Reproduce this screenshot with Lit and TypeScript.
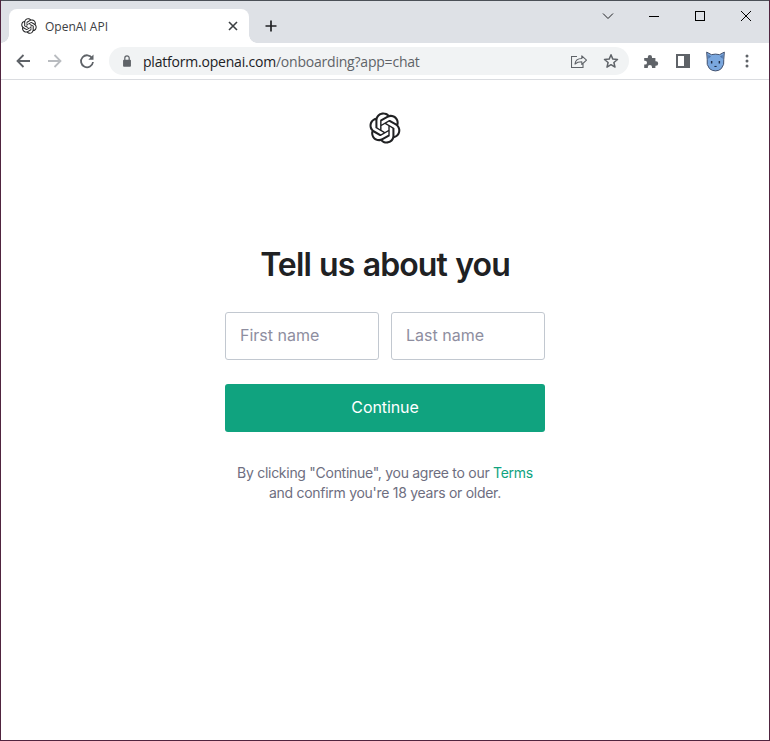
import { LitElement, html, css, svg } from "lit";
import { customElement } from "lit/decorators.js";

const LOGO = "M37.5324 16.8707C37.9808 15.5241 38.1363 14.0974 37.9886 12.6859C37.8409 11.2744 37.3934 9.91076 36.676 8.68622C35.6126 6.83404 33.9882 5.3676 32.0373 4.4985C30.0864 3.62941 27.9098 3.40259 25.8215 3.85078C24.8796 2.7893 23.7219 1.94125 22.4257 1.36341C21.1295 0.785575 19.7249 0.491269 18.3058 0.500197C16.1708 0.495044 14.0893 1.16803 12.3614 2.42214C10.6335 3.67624 9.34853 5.44666 8.6917 7.47815C7.30085 7.76286 5.98686 8.3414 4.8377 9.17505C3.68854 10.0087 2.73073 11.0782 2.02839 12.312C0.956464 14.1591 0.498905 16.2988 0.721698 18.4228C0.944492 20.5467 1.83612 22.5449 3.268 24.1293C2.81966 25.4759 2.66413 26.9026 2.81182 28.3141C2.95951 29.7256 3.40701 31.0892 4.12437 32.3138C5.18791 34.1659 6.8123 35.6322 8.76321 36.5013C10.7141 37.3704 12.8907 37.5973 14.9789 37.1492C15.9208 38.2107 17.0786 39.0587 18.3747 39.6366C19.6709 40.2144 21.0755 40.5087 22.4946 40.4998C24.6307 40.5054 26.7133 39.8321 28.4418 38.5772C30.1704 37.3223 31.4556 35.5506 32.1119 33.5179C33.5027 33.2332 34.8167 32.6547 35.9659 31.821C37.115 30.9874 38.0728 29.9178 38.7752 28.684C39.8458 26.8371 40.3023 24.6979 40.0789 22.5748C39.8556 20.4517 38.9639 18.4544 37.5324 16.8707ZM22.4978 37.8849C20.7443 37.8874 19.0459 37.2733 17.6994 36.1501C17.7601 36.117 17.8666 36.0586 17.936 36.0161L25.9004 31.4156C26.1003 31.3019 26.2663 31.137 26.3813 30.9378C26.4964 30.7386 26.5563 30.5124 26.5549 30.2825V19.0542L29.9213 20.998C29.9389 21.0068 29.9541 21.0198 29.9656 21.0359C29.977 21.052 29.9842 21.0707 29.9867 21.0902V30.3889C29.9842 32.375 29.1946 34.2791 27.7909 35.6841C26.3872 37.0892 24.4838 37.8806 22.4978 37.8849ZM6.39227 31.0064C5.51397 29.4888 5.19742 27.7107 5.49804 25.9832C5.55718 26.0187 5.66048 26.0818 5.73461 26.1244L13.699 30.7248C13.8975 30.8408 14.1233 30.902 14.3532 30.902C14.583 30.902 14.8088 30.8408 15.0073 30.7248L24.731 25.1103V28.9979C24.7321 29.0177 24.7283 29.0376 24.7199 29.0556C24.7115 29.0736 24.6988 29.0893 24.6829 29.1012L16.6317 33.7497C14.9096 34.7416 12.8643 35.0097 10.9447 34.4954C9.02506 33.9811 7.38785 32.7263 6.39227 31.0064ZM4.29707 13.6194C5.17156 12.0998 6.55279 10.9364 8.19885 10.3327C8.19885 10.4013 8.19491 10.5228 8.19491 10.6071V19.808C8.19351 20.0378 8.25334 20.2638 8.36823 20.4629C8.48312 20.6619 8.64893 20.8267 8.84863 20.9404L18.5723 26.5542L15.206 28.4979C15.1894 28.5089 15.1703 28.5155 15.1505 28.5173C15.1307 28.5191 15.1107 28.516 15.0924 28.5082L7.04046 23.8557C5.32135 22.8601 4.06716 21.2235 3.55289 19.3046C3.03862 17.3858 3.30624 15.3413 4.29707 13.6194ZM31.955 20.0556L22.2312 14.4411L25.5976 12.4981C25.6142 12.4872 25.6333 12.4805 25.6531 12.4787C25.6729 12.4769 25.6928 12.4801 25.7111 12.4879L33.7631 17.1364C34.9967 17.849 36.0017 18.8982 36.6606 20.1613C37.3194 21.4244 37.6047 22.849 37.4832 24.2684C37.3617 25.6878 36.8382 27.0432 35.9743 28.1759C35.1103 29.3086 33.9415 30.1717 32.6047 30.6641C32.6047 30.5947 32.6047 30.4733 32.6047 30.3889V21.188C32.6066 20.9586 32.5474 20.7328 32.4332 20.5338C32.319 20.3348 32.154 20.1698 31.955 20.0556ZM35.3055 15.0128C35.2464 14.9765 35.1431 14.9142 35.069 14.8717L27.1045 10.2712C26.906 10.1554 26.6803 10.0943 26.4504 10.0943C26.2206 10.0943 25.9948 10.1554 25.7963 10.2712L16.0726 15.8858V11.9982C16.0715 11.9783 16.0753 11.9585 16.0837 11.9405C16.0921 11.9225 16.1048 11.9068 16.1207 11.8949L24.1719 7.25025C25.4053 6.53903 26.8158 6.19376 28.2383 6.25482C29.6608 6.31589 31.0364 6.78077 32.2044 7.59508C33.3723 8.40939 34.2842 9.53945 34.8334 10.8531C35.3826 12.1667 35.5464 13.6095 35.3055 15.0128ZM14.2424 21.9419L10.8752 19.9981C10.8576 19.9893 10.8423 19.9763 10.8309 19.9602C10.8195 19.9441 10.8122 19.9254 10.8098 19.9058V10.6071C10.8107 9.18295 11.2173 7.78848 11.9819 6.58696C12.7466 5.38544 13.8377 4.42659 15.1275 3.82264C16.4173 3.21869 17.8524 2.99464 19.2649 3.1767C20.6775 3.35876 22.0089 3.93941 23.1034 4.85067C23.0427 4.88379 22.937 4.94215 22.8668 4.98473L14.9024 9.58517C14.7025 9.69878 14.5366 9.86356 14.4215 10.0626C14.3065 10.2616 14.2466 10.4877 14.2479 10.7175L14.2424 21.9419ZM16.071 17.9991L20.4018 15.4978L24.7325 17.9975V22.9985L20.4018 25.4983L16.071 22.9985V17.9991Z";

const logo = (size: number) => html`<svg width=${size} height=${size} viewBox="0 0 41 41"><path d=${LOGO} fill="#202123"></path></svg>`;
const icon = (body: unknown, size = 16) => html`<svg width=${size} height=${size} viewBox="0 0 16 16" fill="none">${body}</svg>`;

@customElement("app-root")
export class AppRoot extends LitElement {
  static styles = css`
    :host { display: block; width: 770px; height: 741px; overflow: hidden; background: #fff; }
    .frame { box-sizing: border-box; height: 741px; display: flex; flex-direction: column;
      border: 1px solid #50243f; border-top: 0; }
    .strip { box-sizing: border-box; height: 43px; flex: none; display: flex; background: #dee1e6;
      border-top: 1px solid #4b5057; padding: 8px 0 0 8px; }
    .tab { position: relative; width: 240px; height: 34px; box-sizing: border-box; background: #fff; border-radius: 8px 8px 0 0;
      display: flex; align-items: center; padding: 0 8px 0 12px; font: 12px "Open Sans", sans-serif; color: #3c4043; }
    .tab::before, .tab::after { content: ""; position: absolute; bottom: 0; width: 8px; height: 8px; }
    .tab::before { left: -8px; background: radial-gradient(circle at 0 0, #dee1e6 7.5px, #fff 8px); }
    .tab::after { right: -8px; background: radial-gradient(circle at 100% 0, #dee1e6 7.5px, #fff 8px); }
    .tab-title { margin-left: 8px; flex: 1; }
    .tab-close { display: flex; width: 16px; justify-content: center; }
    .new-tab { display: flex; align-items: center; justify-content: center; width: 28px; height: 28px; margin: 3px 0 0 8px; }
    .spacer { flex: 1; }
    .win { width: 46px; height: 30px; margin-top: -8px; display: flex; align-items: center; justify-content: center; }
    .toolbar { box-sizing: border-box; height: 37px; flex: none; display: flex; align-items: flex-start; background: #fff;
      border-bottom: 1px solid #dadce0; padding: 4px 6px; }
    .btn { width: 32px; height: 28px; flex: none; display: flex; align-items: center; justify-content: center; }
    .omni { width: 520px; height: 28px; margin: 0 6px; flex: none; box-sizing: border-box; background: #f1f3f4; border-radius: 14px;
      display: flex; align-items: center; padding: 0 2px 0 11px; }
    .url { margin-left: 9px; flex: 1; font: 14px "Open Sans", sans-serif; color: #202124; letter-spacing: -0.21px; white-space: nowrap; }
    .url span { color: #5f6368; }
    .omni-icon { width: 32px; display: flex; justify-content: center; flex: none; }
    .page { flex: 1; display: flex; flex-direction: column; align-items: center; background: #fff; font-family: Inter, sans-serif; }
    .logo { margin-top: 32px; height: 32px; display: flex; }
    h1 { margin: 101px 0 0; font: 600 32px/40px Inter, sans-serif; color: #202123; letter-spacing: -0.88px; word-spacing: 1px; }
    .names { display: flex; gap: 12px; margin-top: 27px; }
    input { box-sizing: border-box; width: 154px; height: 48px; padding: 0 14px 2px; border: 1px solid #c2c8d0; border-radius: 3px;
      font: 16px Inter, sans-serif; color: #202123; outline: none; background: #fff; }
    input::placeholder { color: #8e8ea0; opacity: 1; }
    button { box-sizing: border-box; display: block; width: 320px; height: 48px; margin-top: 24px; border: 0; border-radius: 3px;
      background: #10a37f; color: #fff; font: 16px Inter, sans-serif; padding: 0 0 2px; letter-spacing: -0.1px; }
    .legal { margin: 31px 0 0; width: 320px; text-align: center; font: 14px/20px Inter, sans-serif; color: #6e6e80; letter-spacing: -0.28px; }
    .legal a { color: #10a37f; text-decoration: none; }
  `;

  render() {
    return html`<div class="frame">
      <div class="strip">
        <div class="tab">
          ${logo(16)}
          <span class="tab-title">OpenAI API</span>
          <span class="tab-close">${icon(svg`<path d="M4 4l8 8M12 4l-8 8" stroke="#3c4043" stroke-width="1.6"/>`)}</span>
        </div>
        <div class="new-tab">${icon(svg`<path d="M8 2.5v11M2.500 8h11" stroke="#202124" stroke-width="1.7"/>`)}</div>
        <div class="spacer"></div>
        <div class="win">${icon(svg`<path d="M3 5.500l5 5 5-5" stroke="#202124" stroke-width="1"/>`)}</div>
        <div class="win">${icon(svg`<path d="M3 8.500h10" stroke="#000" stroke-width="1"/>`)}</div>
        <div class="win">${icon(svg`<rect x="3.500" y="3.500" width="9" height="9" stroke="#000" stroke-width="1"/>`)}</div>
        <div class="win">${icon(svg`<path d="M3 3l10 10M13 3L3 13" stroke="#000" stroke-width="1"/>`)}</div>
      </div>
      <div class="toolbar">
        <div class="btn">${icon(svg`<path d="M15 8H2.500M8.500 2L2.500 8l6 6" stroke="#5f6368" stroke-width="1.800"/>`)}</div>
        <div class="btn">${icon(svg`<path d="M1 8h12.500M7.500 2l6 6-6 6" stroke="#b9bcc0" stroke-width="1.800"/>`)}</div>
        <div class="btn">${icon(svg`<path d="M13.200 5.200A6 6 0 1 0 14 9" stroke="#5f6368" stroke-width="1.800"/><path d="M14.500 1.600v5.200H9.300z" fill="#5f6368"/>`)}</div>
        <div class="omni">
          ${icon(svg`<rect x="3.500" y="6.500" width="9" height="8" rx="1" fill="#5f6368"/><path d="M5.500 7V4.600a2.500 2.500 0 0 1 5 0V7" stroke="#5f6368" stroke-width="1.400"/>`, 14)}
          <span class="url">platform.openai.com<span>/onboarding?app=chat</span></span>
          <span class="omni-icon">${icon(svg`<path d="M6 3.500H.5v11H12v-3.500" stroke="#5f6368" stroke-width="1.100"/><path d="M4 11c.3-3.600 2.800-5.500 6.800-5.500V2.800l4.700 4.400-4.700 4.300V8.700c-2.800 0-5 .6-6.800 2.300z" stroke="#5f6368" stroke-width="1.100" stroke-linejoin="round"/>`)}</span>
          <span class="omni-icon">${icon(svg`<path d="M8 1.800l1.800 4.300 4.700.4-3.600 3 1.100 4.600L8 11.700l-4 2.400 1.100-4.600-3.600-3 4.700-.4z" stroke="#5f6368" stroke-width="1.500" stroke-linejoin="round"/>`)}</span>
        </div>
        <div class="btn">${icon(svg`<path d="M1.200 5h3.600V4a2.100 2.100 0 0 1 4.200 0v1h3.400v3.300h.6a2.200 2.200 0 0 1 0 4.400h-.6V15H9v-1a2.100 2.100 0 0 0-4.200 0v1H1.200v-3.400h.9a1.900 1.900 0 0 0 0-3.800h-.9z" fill="#5f6368"/>`)}</div>
        <div class="btn">${icon(svg`<rect x="2" y="2" width="12" height="12" stroke="#5f6368" stroke-width="2"/><rect x="9" y="2" width="5" height="12" fill="#5f6368"/>`)}</div>
        <div class="btn"><svg width="21" height="21" viewBox="1 1 18 19"><path d="M2 2l4.300 2.300q3.700-1 7.400 0L18 2l-.5 6.500q.8 5-2.300 8.500-2.200 2-5.200 2T4.600 17Q1.500 13.500 2.500 8.500z" fill="#7aa7de" stroke="#44526e" stroke-width=".9"/><path d="M3.500 4.500l2.500 1.400-2.600 2zM16.500 4.500L14 5.900l2.600 2z" fill="#4f76ab"/><path d="M6.500 10v2.200M13.500 10v2.200" stroke="#1d2a44" stroke-width="1.300"/><path d="M9 15h2" stroke="#1d2a44"/></svg></div>
        <div class="btn">${icon(svg`<circle cx="8" cy="3" r="1.500" fill="#5f6368"/><circle cx="8" cy="8" r="1.500" fill="#5f6368"/><circle cx="8" cy="13" r="1.500" fill="#5f6368"/>`)}</div>
      </div>
      <main class="page">
        <div class="logo">${logo(32)}</div>
        <h1>Tell us about you</h1>
        <div class="names">
          <input placeholder="First name" />
          <input placeholder="Last name" />
        </div>
        <button>Continue</button>
        <p class="legal">By clicking "Continue", you agree to our <a>Terms</a><br />and confirm you're 18 years or older.</p>
      </main>
    </div>`;
  }
}
